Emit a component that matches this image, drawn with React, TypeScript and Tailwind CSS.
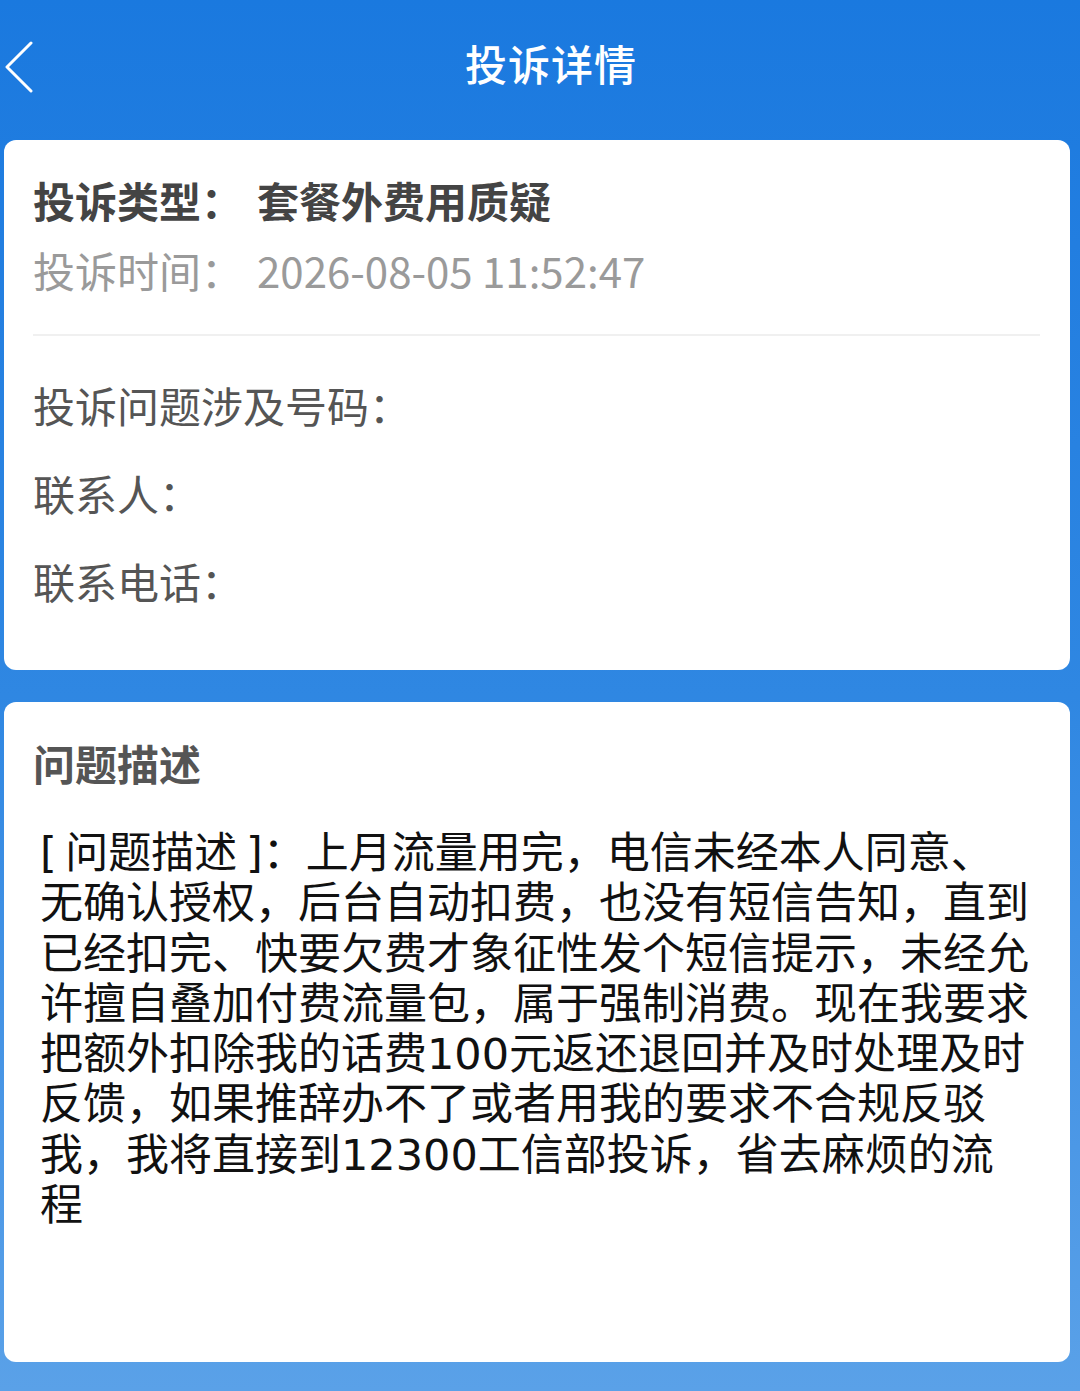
import React from 'react'

const FONT = { fontFamily: '"Noto Sans CJK SC", "Noto Sans", Roboto, sans-serif' }
// 描述正文：拉丁/数字用 DejaVu（字宽更接近原图），汉字回落到 Noto CJK
const BODY_FONT = { fontFamily: '"DejaVu Sans", "Noto Sans CJK SC", sans-serif' }

const DESCRIPTION =
  '[\u2009问题描述\u2009]：上月流量用完，电信未经本人同意、无确认授权，后台自动扣费，也没有短信告知，直到已经扣完、快要欠费才象征性发个短信提示，未经允许擅自叠加付费流量包，属于强制消费。现在我要求把额外扣除我的话费100元返还退回并及时处理及时反馈，如果推辞办不了或者用我的要求不合规反驳我，我将直接到12300工信部投诉，省去麻烦的流程'

function BackIcon() {
  return (
    <svg width="30" height="52" viewBox="0 0 30 52" fill="none">
      <path d="M27 2 L3 26 L27 50" stroke="white" strokeWidth="3" strokeLinecap="round" strokeLinejoin="round" />
    </svg>
  )
}

// 信息行：标签 + 值（号码/联系人已打码，值留空）
function InfoRow({ label, value }: { label: string; value?: React.ReactNode }) {
  return (
    <div className="flex h-[56px] items-center text-[42px] leading-[56px] text-[#555]">
      <span>{label}</span>
      {value && <span className="ml-[16px]">{value}</span>}
    </div>
  )
}

export default function App() {
  return (
    <div
      className="flex min-h-[1391px] w-[1080px] flex-col bg-gradient-to-b from-[#1a79df] via-[#2f87e2] to-[#5aa1e8]"
      style={FONT}
    >
      {/* 顶部导航 */}
      <header className="flex h-[124px] items-center">
        <button className="flex w-[44px] items-center justify-start pl-[4px] pt-[10px]">
          <BackIcon />
        </button>
        <h1 className="flex-1 text-center text-[42px] font-medium tracking-[1px] text-white">投诉详情</h1>
        <div className="w-[22px]" />
      </header>

      {/* 基本信息 */}
      <section className="ml-[4px] mr-[10px] mt-[16px] h-[530px] rounded-[12px] bg-white pl-[29px] pr-[30px] pt-[32px]">
        <div className="flex h-[56px] items-center text-[42px] font-bold leading-[56px] text-[#444]">
          <span>投诉类型：</span>
          <span className="ml-[14px]">套餐外费用质疑</span>
        </div>
        <div className="mt-[14px] flex h-[56px] items-center text-[42px] leading-[56px] text-[#9a9a9a]">
          <span>投诉时间：</span>
          <span className="ml-[14px]">2026-08-05 11:52:47</span>
        </div>
        <div className="mt-[36px] h-[2px] bg-[#f0f0f0]" />
        <div className="mt-[41px] flex flex-col gap-[32px]">
          <InfoRow label="投诉问题涉及号码：" />
          <InfoRow label="联系人：" />
          <InfoRow label="联系电话：" />
        </div>
      </section>

      {/* 问题描述 */}
      <section className="ml-[4px] mr-[10px] mt-[32px] h-[660px] rounded-[12px] bg-white pl-[29px] pt-[33px]">
        <h2 className="h-[56px] text-[42px] font-bold leading-[56px] text-[#555]">问题描述</h2>
        <p className="ml-[7px] mt-[37px] w-[994px] text-[43px] leading-[50.3px] text-[#111]" style={BODY_FONT}>
          {DESCRIPTION}
        </p>
      </section>
    </div>
  )
}
